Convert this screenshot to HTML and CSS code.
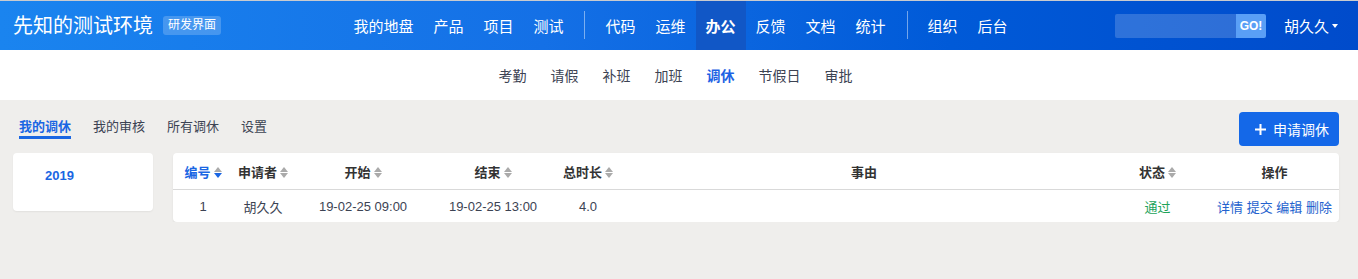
FILE: index.html
```html
<!DOCTYPE html>
<html lang="zh-CN">
<head>
    <meta charset="UTF-8">
    <meta name="viewport" content="width=device-width, initial-scale=1.0">
    <title>先知的测试环境 - 调休</title>
    <link rel="stylesheet" href="styles.css">
</head>
<body>

    <!-- 顶部导航 -->
    <header class="topbar">
        <div class="brand">
            <span class="brand-name">先知的测试环境</span>
            <span class="brand-tag">研发界面</span>
        </div>

        <nav class="mainnav">
            <a href="#">我的地盘</a>
            <a href="#">产品</a>
            <a href="#">项目</a>
            <a href="#">测试</a>
            <span class="divider"></span>
            <a href="#">代码</a>
            <a href="#">运维</a>
            <a href="#" class="active">办公</a>
            <a href="#">反馈</a>
            <a href="#">文档</a>
            <a href="#">统计</a>
            <span class="divider"></span>
            <a href="#">组织</a>
            <a href="#">后台</a>
        </nav>

        <div class="userbox">
            <form class="search">
                <input type="text" class="search-input">
                <button type="button" class="search-btn">GO!</button>
            </form>
            <a href="#" class="user">胡久久<span class="caret"></span></a>
        </div>
    </header>

    <!-- 子导航 -->
    <nav class="subnav">
        <a href="#">考勤</a>
        <a href="#">请假</a>
        <a href="#">补班</a>
        <a href="#">加班</a>
        <a href="#" class="active">调休</a>
        <a href="#">节假日</a>
        <a href="#">审批</a>
    </nav>

    <main class="main">
        <div class="toolbar">
            <div class="tabs">
                <a href="#" class="active">我的调休</a>
                <a href="#">我的审核</a>
                <a href="#">所有调休</a>
                <a href="#">设置</a>
            </div>
            <a href="#" class="btn-primary">
                <svg class="plus" width="11" height="11" viewBox="0 0 11 11"><path d="M5.5 0v11M0 5.5h11" stroke="#fff" stroke-width="2"/></svg>
                申请调休
            </a>
        </div>

        <div class="content">
            <aside class="side-card">
                <a href="#" class="year">2019</a>
            </aside>

            <div class="table-card">
                <table class="grid">
                    <colgroup>
                        <col style="width:60px">
                        <col style="width:60px">
                        <col style="width:140px">
                        <col style="width:120px">
                        <col style="width:70px">
                        <col>
                        <col style="width:105px">
                        <col style="width:129px">
                    </colgroup>
                    <thead>
                        <tr>
                            <th class="sorted">编号<i class="sort down"></i></th>
                            <th>申请者<i class="sort"></i></th>
                            <th>开始<i class="sort"></i></th>
                            <th>结束<i class="sort"></i></th>
                            <th>总时长<i class="sort"></i></th>
                            <th>事由</th>
                            <th>状态<i class="sort"></i></th>
                            <th>操作</th>
                        </tr>
                    </thead>
                    <tbody>
                        <tr>
                            <td>1</td>
                            <td>胡久久</td>
                            <td>19-02-25 09:00</td>
                            <td>19-02-25 13:00</td>
                            <td>4.0</td>
                            <td></td>
                            <td class="status-pass">通过</td>
                            <td class="actions">
                                <a href="#">详情</a>
                                <a href="#">提交</a>
                                <a href="#">编辑</a>
                                <a href="#">删除</a>
                            </td>
                        </tr>
                    </tbody>
                </table>
            </div>
        </div>
    </main>

</body>
</html>
```

FILE: styles.css
```css
body {
    margin: 0;
    padding: 0;
    font-family: "Liberation Sans", "Noto Sans CJK SC", sans-serif;
    font-size: 13px;
    color: #3c4353;
    background: #efeeec;
}

a {
    text-decoration: none;
}

/* 顶部导航 */
.topbar {
    display: grid;
    grid-template-columns: 1fr auto 1fr;
    height: 50px;
    border-top: 1px solid #c9cbcf;
    box-sizing: border-box;
    background: linear-gradient(90deg, #1a84ef 0%, #1470e6 40%, #005ad8 70%, #004bcb 100%);
    color: #fff;
}

.brand {
    display: flex;
    align-items: center;
    padding-left: 13px;
}

.brand-name {
    font-size: 20px;
    line-height: 24px;
}

.brand-tag {
    margin-left: 10px;
    padding: 0 5px;
    font-size: 12px;
    line-height: 19px;
    border-radius: 3px;
    background: rgba(255, 255, 255, 0.2);
}

.mainnav {
    display: flex;
    align-items: stretch;
    padding-left: 3px;
}

.mainnav a {
    display: flex;
    align-items: center;
    padding: 0 10px;
    font-size: 15px;
    color: #fff;
}

.mainnav a.active {
    background: #1157c6;
    font-weight: bold;
}

.mainnav .divider {
    width: 1px;
    height: 28px;
    margin: 10px 10px 0 11px;
    background: rgba(255, 255, 255, 0.45);
}

.userbox {
    display: flex;
    align-items: center;
    justify-content: flex-end;
}

.search {
    display: flex;
    margin: 0;
}

.search-input {
    width: 121px;
    height: 24px;
    box-sizing: border-box;
    border: none;
    border-radius: 2px 0 0 2px;
    background: rgba(255, 255, 255, 0.18);
    outline: none;
}

.search-btn {
    width: 30px;
    height: 24px;
    padding: 0;
    border: none;
    border-radius: 0 2px 2px 0;
    background: #5a9ff6;
    color: #fff;
    font-family: "Liberation Sans", sans-serif;
    font-size: 12px;
    font-weight: bold;
}

.user {
    display: flex;
    align-items: center;
    margin-left: 18px;
    padding-right: 20px;
    color: #fff;
    font-size: 15px;
}

.caret {
    margin-left: 3px;
    border-left: 3.5px solid transparent;
    border-right: 3.5px solid transparent;
    border-top: 4px solid #fff;
}

/* 子导航 */
.subnav {
    display: flex;
    justify-content: center;
    align-items: center;
    height: 50px;
    background: #fff;
    padding-right: 7px;
}

.subnav a {
    padding: 0 12px;
    font-size: 14px;
    color: #3c4353;
}

.subnav a.active {
    color: #1d62e4;
    font-weight: bold;
}

/* 主体 */
.main {
    padding: 12px 19px 0 13px;
}

.toolbar {
    display: flex;
    justify-content: space-between;
    align-items: flex-start;
}

.tabs {
    display: flex;
    gap: 22px;
    margin-top: 5px;
    padding-left: 6px;
}

.tabs a {
    line-height: 19px;
    font-size: 13px;
    color: #3c4353;
    border-bottom: 3px solid transparent;
}

.tabs a.active {
    color: #1a66e3;
    font-weight: bold;
    border-bottom-color: #1a66e3;
}

.btn-primary {
    display: flex;
    align-items: center;
    gap: 7px;
    height: 34px;
    padding: 0 10px 0 16px;
    box-sizing: border-box;
    border-radius: 4px;
    background: #1468e8;
    color: #fff;
    font-size: 14px;
}

.content {
    display: flex;
    align-items: flex-start;
    gap: 20px;
    margin-top: 7px;
}

.side-card {
    width: 140px;
    height: 58px;
    box-sizing: border-box;
    padding: 13px 0 0 32px;
    background: #fff;
    border-radius: 4px;
    box-shadow: 0 1px 2px rgba(0, 0, 0, 0.06);
}

.year {
    line-height: 20px;
    font-weight: bold;
    color: #1a66e3;
}

.table-card {
    flex: 1;
    background: #fff;
    border-radius: 4px;
    box-shadow: 0 1px 2px rgba(0, 0, 0, 0.08);
}

.grid {
    width: 100%;
    table-layout: fixed;
    border-collapse: collapse;
}

.grid th {
    height: 36px;
    padding: 0 4px;
    font-size: 13px;
    font-weight: bold;
    color: #333;
    text-align: center;
    white-space: nowrap;
    border-bottom: 1px solid #d9d9d9;
}

.grid th.sorted {
    color: #1a66e3;
}

.grid td {
    height: 32px;
    padding: 0 4px;
    text-align: center;
    color: #3c4353;
    white-space: nowrap;
}

.sort {
    display: inline-block;
    position: relative;
    width: 8px;
    height: 11px;
    margin-left: 3px;
    vertical-align: -1px;
}

.sort::before,
.sort::after {
    content: "";
    position: absolute;
    left: 0;
    border-left: 4px solid transparent;
    border-right: 4px solid transparent;
}

.sort::before {
    top: 0;
    border-bottom: 5px solid #aaa;
}

.sort::after {
    bottom: 0;
    border-top: 5px solid #aaa;
}

.sort.down::after {
    border-top-color: #1a66e3;
}

.status-pass {
    color: #21a35a !important;
}

.actions a {
    color: #2462ce;
}
```
